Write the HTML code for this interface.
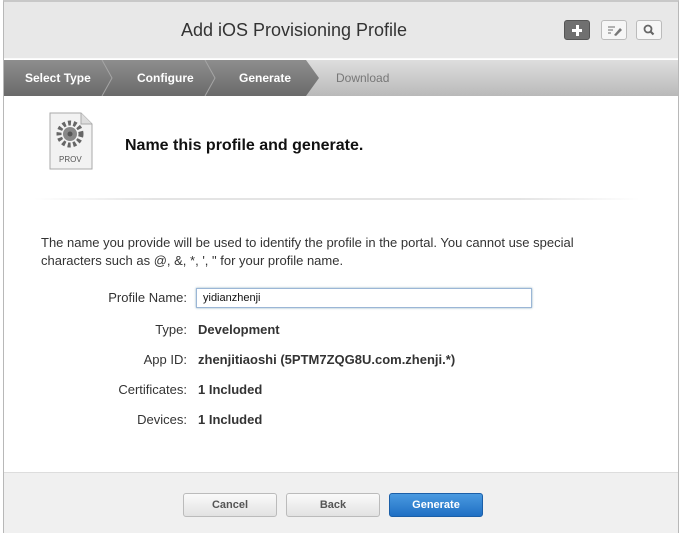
<!DOCTYPE html>
<html><head><style>
*{margin:0;padding:0;box-sizing:border-box}
body{width:680px;height:534px;background:#fff;font-family:"Liberation Sans",sans-serif;position:relative;overflow:hidden}
.frame{position:absolute;left:3px;top:0;width:676px;height:533px;border:1px solid #b8b8b8;border-top:2px solid #c8c8c8;background:#fff}
.top{position:absolute;left:0;top:0;width:100%;height:57px;background:#e8e8e8;border-bottom:1px solid #fafafa}
.title{position:absolute;left:0;width:580px;text-align:center;top:18px;font-size:18px;color:#333}
.ib{position:absolute;top:18px;width:26px;height:20px;border:1px solid #bbb;border-radius:3px;background:#f6f6f6}
.crumb{position:absolute;left:0;top:58px;width:100%;height:36px;background:linear-gradient(#dedede,#b9b9b9)}
.crumb svg{position:absolute;left:0;top:0}
.cl{position:absolute;top:11px;font-size:12px;font-weight:bold;color:#fff}
.lbl{position:absolute;font-size:13px;color:#333;text-align:right;width:170px;left:13px}
.val{position:absolute;left:194px;font-size:13px;font-weight:bold;color:#333}
.foot{position:absolute;left:0;top:470px;width:100%;height:61px;background:#f0f0f0;border-top:1px solid #ddd}
.btn{position:absolute;top:20px;width:94px;height:24px;border:1px solid #bbb;border-radius:3px;background:linear-gradient(#fafafa,#e2e2e2);font-size:11px;font-weight:bold;color:#555;text-align:center;line-height:22px}
</style></head><body>
<div class="frame">
 <div class="top">
  <div class="title">Add iOS Provisioning Profile</div>
  <div class="ib" style="left:560px;background:#707070;border-color:#555"><div style="position:absolute;left:7px;top:8px;width:10px;height:3px;background:#fff"></div><div style="position:absolute;left:10.5px;top:4px;width:3px;height:11px;background:#fff"></div></div>
  <div class="ib" style="left:597px"><svg width="24" height="18"><path d="M6 6h7M6 9h5M6 12h3" stroke="#888" stroke-width="1.2"/><path d="M12 14l6-7 2 2-6 6z" fill="#777"/></svg></div>
  <div class="ib" style="left:632px"><svg width="24" height="18"><circle cx="11" cy="8" r="3.5" stroke="#666" stroke-width="1.8" fill="none"/><path d="M13.5 10.5l3 3" stroke="#666" stroke-width="2.2"/></svg></div>
 </div>
 <div class="crumb">
  <svg width="680" height="36"><defs><linearGradient id="g" x1="0" y1="0" x2="0" y2="1"><stop offset="0" stop-color="#8e8e8e"/><stop offset="1" stop-color="#6a6a6a"/></linearGradient></defs>
  <path d="M0 0H302L315 18L302 36H0Z" fill="url(#g)"/>
  <path d="M98 0L108 18L98 36M201 0L211 18L201 36" stroke="#a5a5a5" fill="none"/></svg>
  <div class="cl" style="left:21px">Select Type</div>
  <div class="cl" style="left:133px">Configure</div>
  <div class="cl" style="left:235px">Generate</div>
  <div class="cl" style="left:332px;color:#777;font-weight:normal">Download</div>
 </div>
 <svg style="position:absolute;left:45px;top:110px" width="44" height="58"><path d="M1 1H32L43 12V57H1Z" fill="#f2f2f2" stroke="#aaa"/><path d="M32 1V12H43" fill="#ddd" stroke="#aaa"/><circle cx="21" cy="22" r="11" fill="none" stroke="#666" stroke-width="5" stroke-dasharray="3 2.5"/><circle cx="21" cy="22" r="7" fill="#888"/><circle cx="21" cy="22" r="2.5" fill="#555"/><text x="10" y="50" font-size="8" fill="#555" font-family="Liberation Sans">PROV</text></svg>
 <div style="position:absolute;left:121px;top:135px;font-size:16px;font-weight:bold;color:#111">Name this profile and generate.</div>
 <div style="position:absolute;left:30px;top:196px;width:606px;height:2px;background:linear-gradient(90deg,#fff,#e4e4e4 20%,#e4e4e4 80%,#fff)"></div>
 <div style="position:absolute;left:37px;top:232px;width:580px;font-size:13px;line-height:18px;color:#333">The name you provide will be used to identify the profile in the portal. You cannot use special characters such as @, &amp;, *, ', " for your profile name.</div>
 <div class="lbl" style="top:288px">Profile Name:</div>
 <div style="position:absolute;left:192px;top:286px;width:336px;height:20px;border:1px solid #9bb6d6;box-shadow:0 0 2px #8ab;font-size:11px;padding:3px 6px;color:#111">yidianzhenji</div>
 <div class="lbl" style="top:320px">Type:</div><div class="val" style="top:320px">Development</div>
 <div class="lbl" style="top:350px">App ID:</div><div class="val" style="top:350px">zhenjitiaoshi (5PTM7ZQG8U.com.zhenji.*)</div>
 <div class="lbl" style="top:380px">Certificates:</div><div class="val" style="top:380px">1 Included</div>
 <div class="lbl" style="top:410px">Devices:</div><div class="val" style="top:410px">1 Included</div>
 <div class="foot">
  <div class="btn" style="left:179px">Cancel</div>
  <div class="btn" style="left:282px">Back</div>
  <div class="btn" style="left:385px;background:linear-gradient(#4a9ae0,#1f6fc4);border-color:#1b5fa8;color:#fff">Generate</div>
 </div>
</div>
</body></html>
